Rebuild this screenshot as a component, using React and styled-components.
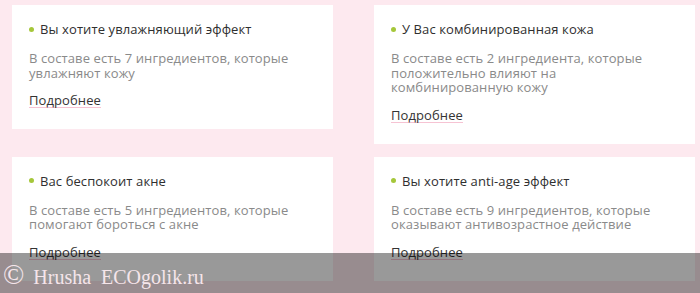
import styled, {createGlobalStyle} from 'styled-components';

const GlobalStyle = createGlobalStyle`
  html, body {
    margin: 0;
    padding: 0;
    background: #fde9ef;
  }
  body {
    width: 700px;
    height: 293px;
    overflow: hidden;
    position: relative;
    font-family: "Open Sans", "Noto Sans", sans-serif;
  }
`;

const Grid = styled.section`
  display: grid;
  grid-template-columns: 321px 321px;
  column-gap: 41px;
  row-gap: 13px;
  align-items: start;
  padding: 5px 0 0 12px;
`;

const Card = styled.article`
  display: flex;
  flex-direction: column;
  align-items: flex-start;
  background: #fff;
  padding: 16px 17px 21px;
`;

const Title = styled.h3`
  display: flex;
  align-items: center;
  gap: 6px;
  margin: 0;
  font-size: 13px;
  font-weight: 500;
  line-height: 16px;
  letter-spacing: 0.1px;
  color: #2f2f2f;

  &::before {
    content: '';
    width: 5px;
    height: 5px;
    border-radius: 50%;
    background: #a5c73a;
    flex: none;
  }
`;

const Text = styled.p`
  margin: 14px 0 0;
  font-size: 13px;
  line-height: 14.5px;
  letter-spacing: 0.1px;
  color: #8a8a8a;
`;

const More = styled.a`
  display: block;
  margin-top: 13px;
  font-size: 13px;
  line-height: 14px;
  letter-spacing: 0.1px;
  color: #333;
  text-decoration: none;
  border-bottom: 1px solid #f6c3d3;
`;

const Watermark = styled.div`
  position: absolute;
  left: 0;
  right: 0;
  bottom: 0;
  height: 40px;
  overflow: hidden;
  background: rgba(0, 0, 0, 0.4);
  padding: 4px 0 0 3px;
  box-sizing: border-box;
  font-family: "Liberation Serif", serif;
  font-size: 20px;
  line-height: 40px;
  color: #f5e5ea;
  white-space: pre;
`;

const Copy = styled.span`
  font-size: 28px;
  line-height: 0;
  margin-right: 9px;
`;

const items = [
  {
    title: 'Вы хотите увлажняющий эффект',
    text: 'В составе есть 7 ингредиентов, которые увлажняют кожу',
  },
  {
    title: 'У Вас комбинированная кожа',
    text: 'В составе есть 2 ингредиента, которые положительно влияют на комбинированную кожу',
  },
  {
    title: 'Вас беспокоит акне',
    text: 'В составе есть 5 ингредиентов, которые помогают бороться с акне',
  },
  {
    title: 'Вы хотите anti-age эффект',
    text: 'В составе есть 9 ингредиентов, которые оказывают антивозрастное действие',
  },
];

const App = () => {
  return (
    <>
      <GlobalStyle />
      <Grid>
        {items.map (item => (
          <Card key={item.title}>
            <Title>{item.title}</Title>
            <Text>{item.text}</Text>
            <More href="#">Подробнее</More>
          </Card>
        ))}
      </Grid>
      <Watermark>
        <Copy>©</Copy>
        {'Hrusha  ECOgolik.ru'}
      </Watermark>
    </>
  );
};

export default App;
